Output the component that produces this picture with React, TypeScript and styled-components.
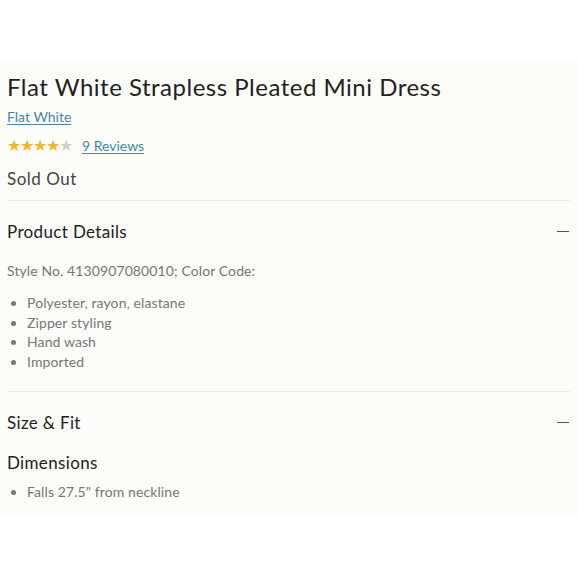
import React from 'react';
import styled, { createGlobalStyle } from 'styled-components';

const Global = createGlobalStyle`
  body {
    margin: 0;
    background: #ffffff;
    font-family: 'Lato', 'Open Sans', sans-serif;
  }
`;

const Page = styled.div`
  padding-top: 60px;
`;

const Panel = styled.div`
  background: #fcfcf8;
  width: 579px;
  padding: 12px 9px 16px 7px;
  box-sizing: border-box;
`;

const Title = styled.h1`
  margin: 0;
  font-size: 24px;
  font-weight: 400;
  letter-spacing: 0.5px;
  color: #222;
  line-height: 30px;
`;

const Link = styled.a`
  color: #4a86a8;
  font-size: 14px;
  letter-spacing: 0;
  text-decoration: underline;
  text-underline-offset: 2px;
`;

const BrandRow = styled.div`
  margin-top: 4px;
  line-height: 20px;
`;

const RatingRow = styled.div`
  display: flex;
  align-items: center;
  gap: 10px;
  margin-top: 9px;
  line-height: 20px;
`;

const Stars = styled.div`
  display: flex;
`;

const Star = styled.span<{ $on: boolean }>`
  color: ${(p) => (p.$on ? '#ebb536' : '#cfcfcf')};
  font-size: 16px;
  line-height: 16px;
  width: 13px;
  font-family: 'DejaVu Sans', sans-serif;
`;

const Status = styled.div`
  margin-top: 12px;
  margin-bottom: 10px;
  font-size: 17px;
  letter-spacing: 0.5px;
  color: #444;
  line-height: 22px;
`;

const Section = styled.section<{ $gapBottom?: number }>`
  border-top: 1px solid #e9e9e6;
  padding-bottom: ${(p) => p.$gapBottom ?? 0}px;
`;

const SectionHead = styled.div`
  display: flex;
  justify-content: space-between;
  align-items: center;
  height: 60px;
  font-size: 17px;
  letter-spacing: 0.35px;
  color: #222;
`;

const Minus = styled.span`
  width: 12px;
  height: 1px;
  background: #555;
  margin-right: 1px;
`;

const Text = styled.p`
  margin: 0;
  font-size: 14px;
  letter-spacing: 0.1px;
  color: #777;
  line-height: 20px;
`;

const List = styled.ul<{ $top: number }>`
  margin: ${(p) => p.$top}px 0 0;
  padding-left: 20px;
  font-size: 14px;
  letter-spacing: 0.1px;
  color: #777;
  line-height: 19.5px;
`;

const SubHead = styled.h3`
  margin: 0;
  font-size: 17px;
  font-weight: 400;
  letter-spacing: 0.35px;
  color: #222;
  line-height: 22px;
`;

export default function App() {
  return (
    <Page>
      <Global />
      <Panel>
        <Title>Flat White Strapless Pleated Mini Dress</Title>
        <BrandRow>
          <Link href="#">Flat White</Link>
        </BrandRow>
        <RatingRow>
          <Stars>
            {[0, 1, 2, 3, 4].map((i) => (
              <Star key={i} $on={i < 4}>★</Star>
            ))}
          </Stars>
          <Link href="#">9 Reviews</Link>
        </RatingRow>
        <Status>Sold Out</Status>
        <Section $gapBottom={20}>
          <SectionHead>
            <span>Product Details</span>
            <Minus />
          </SectionHead>
          <Text>Style No. 4130907080010; Color Code:</Text>
          <List $top={12}>
            <li>Polyester, rayon, elastane</li>
            <li>Zipper styling</li>
            <li>Hand wash</li>
            <li>Imported</li>
          </List>
        </Section>
        <Section>
          <SectionHead>
            <span>Size &amp; Fit</span>
            <Minus />
          </SectionHead>
          <SubHead>Dimensions</SubHead>
          <List $top={8}>
            <li>Falls 27.5" from neckline</li>
          </List>
        </Section>
      </Panel>
    </Page>
  );
}
